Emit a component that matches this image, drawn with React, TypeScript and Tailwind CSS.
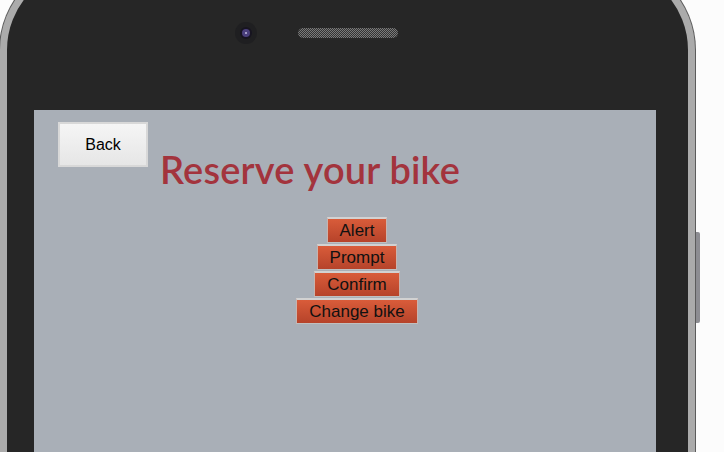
export default function App() {
  const actions = ['Alert', 'Prompt', 'Confirm', 'Change bike'];

  return (
    <div className="w-[724px] h-[452px] overflow-hidden bg-[#fcfcfc] font-['Liberation_Sans',Arial,sans-serif]">
      <div className="flex items-start -mt-[40px]">
        {/* phone body */}
        <div className="w-[695px] h-[620px] shrink-0 rounded-[90px] border-[7px] border-[#ababab] bg-[#262626] shadow-[0_0_0_1px_#5c5c5c]">
          <div className="flex items-center h-[143px] pb-[64px] pt-[52px]">
            <div className="ml-[228px] w-[22px] h-[22px] rounded-full bg-[#1f1f21] flex items-center justify-center">
              <div className="w-[12px] h-[12px] rounded-full bg-[#171420] flex items-center justify-center">
                <div className="w-[8px] h-[8px] rounded-full bg-[#4a3f7c] flex items-start justify-center">
                  <div className="w-[2px] h-[2px] mt-[3px] rounded-full bg-[#c2bce0]" />
                </div>
              </div>
            </div>
            <svg width="100" height="10" className="ml-[41px]" viewBox="0 0 100 10">
              <defs>
                <pattern id="mesh" width="2" height="2" patternUnits="userSpaceOnUse">
                  <rect width="2" height="2" fill="#333" />
                  <rect width="1" height="1" fill="#7a7a7a" />
                  <rect x="1" y="1" width="1" height="1" fill="#7a7a7a" />
                </pattern>
              </defs>
              <rect width="100" height="10" rx="5" fill="url(#mesh)" />
            </svg>
          </div>

          {/* screen */}
          <div className="ml-[27px] w-[622px] h-[470px] bg-[#a9afb7] pt-[12px] pl-[24px]">
            <div className="flex items-start">
              <button className="w-[90px] h-[45px] shrink-0 border-2 border-[#d8d8d8] bg-gradient-to-b from-[#f5f5f5] to-[#e6e6e6] text-[16px] text-black">
                Back
              </button>
              <h1 className="ml-[12px] mt-[24px] font-['Lato',sans-serif] font-semibold text-[38px] leading-[46px] text-[#a3343d] tracking-[0.2px]">
                Reserve your bike
              </h1>
            </div>

            <div className="flex flex-col items-center gap-[1px] mt-[25px]">
              {actions.map((label) => (
                <button
                  key={label}
                  className="h-[26px] px-[12px] border-x border-t-2 border-b border-x-[#c9b3ad] border-t-[#d2d2d2] border-b-[#c0c0c0] bg-gradient-to-b from-[#d95c3a] to-[#b6432a] text-[17px] leading-[20px] text-[#111]"
                >
                  {label}
                </button>
              ))}
            </div>
          </div>
        </div>

        {/* side button */}
        <div className="mt-[272px] ml-[1px] w-[4px] h-[91px] rounded-r-[2px] bg-[#8d8d92]" />
      </div>
    </div>
  );
}
